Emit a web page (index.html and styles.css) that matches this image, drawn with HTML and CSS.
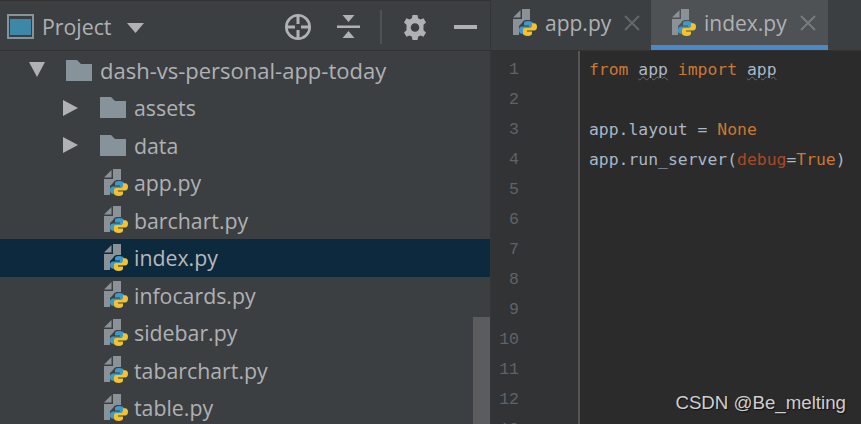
FILE: index.html
```html
<!DOCTYPE html>
<html lang="en">
<head>
<meta charset="utf-8">
<title>Project</title>
<link rel="stylesheet" href="styles.css">
</head>
<body>
<svg class="defs" width="0" height="0" aria-hidden="true">
  <symbol id="py" viewBox="0 0 26 28">
    <path fill="#8a9297" d="M0 8.500 7.500 1v7.500zM9 0h8v11h-4.500q-2.500 .5-3.500 3zM0 10h9v4l-3 3v9H0z"/>
    <path id="snake" fill="#3d9ac9" d="M15 12c-2.500 0-4 .8-4 2.400V16.500h5v1H9c-2 0-3 1.500-3 3.700 0 2.200 1 3.600 2.800 3.600H11v-2.300c0-1.500 1.200-2.600 2.600-2.600H18c1.300 0 2-.8 2-2v-3.400c0-1.600-1.800-2.500-5-2.500z"/>
    <path fill="#f2c230" transform="rotate(180 15 19.500)" d="M15 12c-2.500 0-4 .8-4 2.400V16.500h5v1H9c-2 0-3 1.500-3 3.700 0 2.200 1 3.600 2.800 3.600H11v-2.300c0-1.500 1.200-2.600 2.600-2.600H18c1.300 0 2-.8 2-2v-3.400c0-1.600-1.800-2.500-5-2.500z"/>
  </symbol>
  <symbol id="folder" viewBox="0 0 26 21">
    <path fill="#87939a" d="M0 0h11l4 4h11v17H0z"/>
  </symbol>
</svg>
<main class="ide">
  <section class="side">
    <header class="bar">
      <svg class="win" width="27" height="25" viewBox="0 0 27 25"><path fill="#87939a" d="M0 0h27v25H0z"/><path fill="#3c3f41" d="M2 2h23v21H2z"/><path fill="#3d88a8" d="M3 5h21v16H3z"/></svg>
      <span class="bar-title">Project</span>
      <svg class="caret" width="17" height="10" viewBox="0 0 17 10"><path fill="#afb1b3" d="M0 0h17L8.500 10z"/></svg>
      <span class="bar-fill"></span>
      <svg class="tool t1" width="26" height="26" viewBox="0 0 26 26"><circle cx="13" cy="13" r="11.700" fill="none" stroke="#afb1b3" stroke-width="2.600"/><path fill="#afb1b3" d="M11.500 2h3v8h-3zM11.500 16h3v8h-3zM2 11.500h8v3H2zM16 11.500h8v3h-8z"/></svg>
      <svg class="tool t2" width="23" height="24" viewBox="0 0 23 24"><path fill="#afb1b3" d="M0 10.500h23v2.500H0zM5.500 0h12L11.500 7zM11.500 16l6 7h-12z"/></svg>
      <span class="sep"></span>
      <svg class="tool t3" width="24" height="25" viewBox="0 0 24 25"><path fill="#afb1b3" fill-rule="evenodd" d="M9.500 0h5l.6 3.300 2.400 1.200 3-1.200 2.500 4.300-2.500 2.200v5.400l2.500 2.200-2.500 4.300-3-1.200-2.400 1.200-.6 3.300h-5l-.6-3.300-2.400-1.200-3 1.200L1 17.400l2.500-2.200V9.800L1 7.600l2.500-4.300 3 1.200 2.400-1.200zM12 8.200a4.300 4.300 0 1 0 0 8.600 4.300 4.300 0 0 0 0-8.600z"/></svg>
      <svg class="tool t4" width="23" height="4" viewBox="0 0 23 4"><path fill="#afb1b3" d="M0 0h23v4H0z"/></svg>
    </header>
    <ul class="tree">
      <li class="row lv0"><svg class="arrow" width="16" height="16" viewBox="0 0 16 16"><path fill="#afb1b3" d="M0 0h16L8 15z"/></svg><svg class="folder" width="26" height="21"><use href="#folder"/></svg><span>dash-vs-personal-app-today</span></li>
      <li class="row lv1"><svg class="arrow" width="15" height="16" viewBox="0 0 15 16"><path fill="#afb1b3" d="M0 0l15 8-15 8z"/></svg><svg class="folder" width="26" height="21"><use href="#folder"/></svg><span>assets</span></li>
      <li class="row lv1"><svg class="arrow" width="15" height="16" viewBox="0 0 15 16"><path fill="#afb1b3" d="M0 0l15 8-15 8z"/></svg><svg class="folder" width="26" height="21"><use href="#folder"/></svg><span>data</span></li>
      <li class="row lv2"><svg class="pyicon" width="26" height="28"><use href="#py"/></svg><span>app.py</span></li>
      <li class="row lv2"><svg class="pyicon" width="26" height="28"><use href="#py"/></svg><span>barchart.py</span></li>
      <li class="row lv2 selected"><svg class="pyicon" width="26" height="28"><use href="#py"/></svg><span>index.py</span></li>
      <li class="row lv2"><svg class="pyicon" width="26" height="28"><use href="#py"/></svg><span>infocards.py</span></li>
      <li class="row lv2"><svg class="pyicon" width="26" height="28"><use href="#py"/></svg><span>sidebar.py</span></li>
      <li class="row lv2"><svg class="pyicon" width="26" height="28"><use href="#py"/></svg><span>tabarchart.py</span></li>
      <li class="row lv2"><svg class="pyicon" width="26" height="28"><use href="#py"/></svg><span>table.py</span></li>
    </ul>
    <div class="scroll"></div>
  </section>
  <section class="editor">
    <nav class="tabs">
      <div class="tab"><svg class="pyicon" width="26" height="28"><use href="#py"/></svg><span>app.py</span><svg class="close" width="16" height="16" viewBox="0 0 16 16"><path stroke="#63676a" stroke-width="2" d="M1 1l14 14M15 1 1 15"/></svg></div>
      <div class="tab active"><svg class="pyicon" width="26" height="28"><use href="#py"/></svg><span>index.py</span><svg class="close" width="16" height="16" viewBox="0 0 16 16"><path stroke="#787b7e" stroke-width="2" d="M1 1l14 14M15 1 1 15"/></svg></div>
    </nav>
    <div class="body">
      <ol class="gutter">
        <li>1</li><li>2</li><li>3</li><li>4</li><li>5</li><li>6</li><li>7</li><li>8</li><li>9</li><li>10</li><li>11</li><li>12</li><li>13</li>
      </ol>
      <div class="code">
        <div class="line"><span class="kw">from</span> <span class="warn">app</span> <span class="kw">import</span> <span class="warn">app</span></div>
        <div class="line"></div>
        <div class="line">app.<span class="ml">layout</span> = <span class="kw">None</span></div>
        <div class="line">app.<span class="ml">run_server</span><span class="ml">(</span><span class="arg">debug</span>=<span class="kw">True</span>)</div>
      </div>
    </div>
    <div class="mark">CSDN @Be_melting</div>
  </section>
</main>
</body>
</html>
```
FILE: styles.css
```css
* { box-sizing: border-box; }
html, body { margin: 0; height: 100%; overflow: hidden; background: #3c3f41; }
.defs { position: absolute; }
.ide { display: flex; width: 861px; height: 424px; font-family: "Open Sans", "Noto Sans", sans-serif; }
.side { position: relative; width: 491px; flex: none; background: #3c3f41; border-right: 1px solid #333638; overflow: hidden; }
.bar { display: flex; align-items: center; height: 51px; padding: 2px 0 0 7px; border-bottom: 1px solid #323232; border-top: 1px solid #333; }
.bar-title { margin-left: 8px; font-size: 21.300px; color: #afb1b3; }
.caret { margin-left: 16px; margin-top: 2px; }
.bar-fill { flex: 1; }
.t1 { margin-right: 26px; }
.t2 { margin-right: 20px; }
.sep { width: 2px; height: 34px; background: #4f5254; margin-right: 21px; }
.t3 { margin-right: 27px; margin-top: 1px; }
.t4 { margin-right: 13px; }
.tree { list-style: none; margin: 0; padding: 0; }
.row { display: flex; align-items: center; height: 37.500px; font-size: 21.300px; color: #afb1b3; white-space: nowrap; }
.lv0 { padding-left: 29px; height: 38px; font-size: 22px; }
.lv0 .arrow { margin-right: 21px; }
.lv1 { padding-left: 63px; }
.lv1 .arrow { margin-right: 22px; }
.lv2 { padding-left: 104px; }
.folder { margin-right: 8px; flex: none; }
.pyicon { flex: none; margin-right: 4px; }
.selected { background: #0d293e; color: #b6b8ba; }
.scroll { position: absolute; left: 473px; top: 317px; width: 17px; height: 107px; background: #5a5c5e; }
.editor { position: relative; flex: 1; display: flex; flex-direction: column; min-width: 0; }
.tabs { display: flex; height: 51px; padding-left: 22px; background: #3c3f41; border-bottom: 1px solid #323232; flex: none; }
.tab { display: flex; align-items: center; height: 50px; padding-bottom: 5px; font-size: 21px; color: #afb1b3; }
.tab:first-child { width: 138px; }
.tab .pyicon { margin-right: 6px; }
.tab .close { margin-left: 13px; }
.active { width: 177px; padding-left: 21px; background: #4e5254; border-bottom: 5px solid #4a88c7; padding-bottom: 0; }
.body { flex: 1; display: flex; background: #2b2b2b; min-height: 0; }
.gutter { list-style: none; margin: 0; padding: 4px 0 0; width: 89px; flex: none; background: #313335; border-right: 2px solid #555; font-family: "Liberation Mono", monospace; font-size: 16.500px; color: #606366; }
.gutter li { height: 30px; line-height: 30px; text-align: right; padding-right: 59px; }
.code { flex: 1; padding: 4px 0 0 9px; font-family: "DejaVu Sans Mono", monospace; font-size: 16.400px; color: #a9b7c6; }
.line { height: 30px; line-height: 30px; white-space: pre; }
.kw { color: #cc7832; }
.arg { color: #aa4926; }
.ml { color: #a9b7c6; }
.warn { text-decoration: underline wavy #6a6a6a 1px; }
.mark { position: absolute; right: 15px; bottom: 10px; font-family: "Liberation Sans", sans-serif; font-size: 18.700px; color: #cfcfcf; text-shadow: 1px 1px 1px #111; }
```
